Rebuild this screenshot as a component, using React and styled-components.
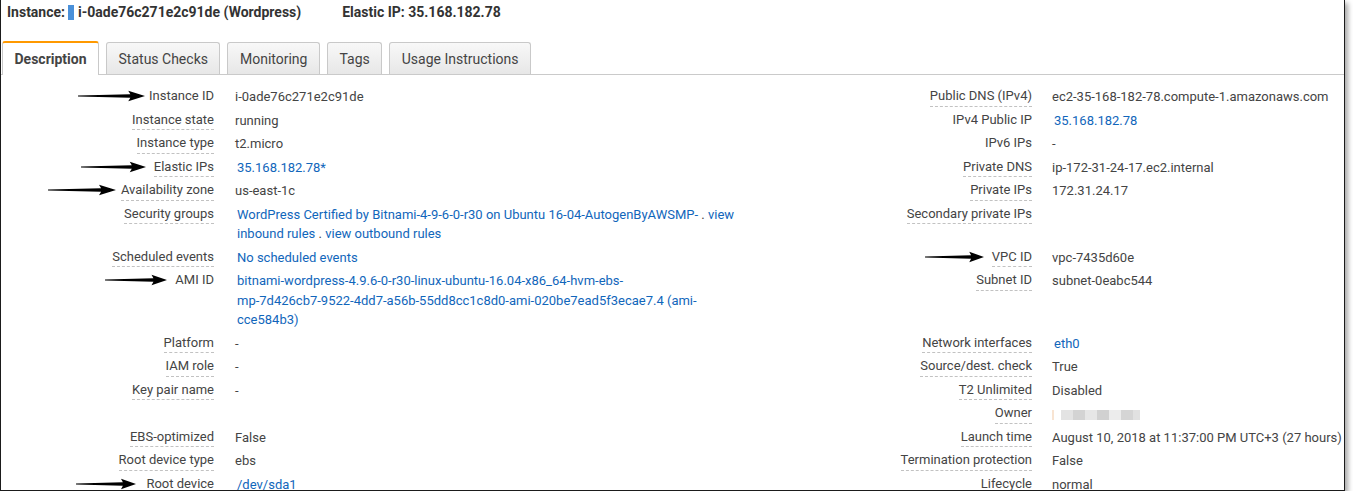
import React from "react";
import styled, { createGlobalStyle } from "styled-components";

const Global = createGlobalStyle`
  html, body { margin: 0; padding: 0; background: #fff; }
  body { font-family: Roboto, "Noto Sans", Arial, sans-serif; }
`;

const Frame = styled.div`
  position: relative;
  width: 1345px;
  height: 491px;
  box-sizing: border-box;
  border: 1px solid #1b1b1b;
  border-top: none;
  overflow: hidden;
  background: #fff;
  box-shadow: 3px 3px 5px rgba(0, 0, 0, 0.35);
`;

const Header = styled.div`
  display: flex;
  align-items: center;
  height: 24px;
  padding-left: 6px;
  font-size: 14px;
  font-weight: 700;
  color: #333;
  white-space: nowrap;
`;

const IdMark = styled.span`
  display: inline-block;
  width: 6px;
  height: 15px;
  background: #4a90d9;
  margin: 0 4px 0 3px;
`;

const HeaderGroup = styled.span`
  margin-left: ${(p) => p.$offset || 0}px;
`;

const TabBar = styled.div`
  display: flex;
  align-items: flex-end;
  height: 33px;
  margin-top: 17px;
  padding-left: 1px;
  border-bottom: 1px solid #cacaca;
`;

const Tab = styled.div`
  box-sizing: border-box;
  height: ${(p) => (p.$active ? 34 : 32)}px;
  margin-left: ${(p) => (p.$first ? 0 : 7)}px;
  margin-bottom: ${(p) => (p.$active ? -1 : 0)}px;
  padding: 0 11.5px;
  display: flex;
  align-items: center;
  font-size: 14px;
  font-weight: ${(p) => (p.$active ? 700 : 400)};
  color: #444;
  border: 1px solid #c9c9c9;
  border-top: ${(p) => (p.$active ? "2px solid #f90" : "1px solid #c9c9c9")};
  border-bottom: none;
  border-radius: 3px 3px 0 0;
  background: ${(p) => (p.$active ? "#fff" : "linear-gradient(#f8f8f8, #e7e7e7)")};
`;

const Grid = styled.div`
  display: grid;
  grid-template-columns: 234px 507px 310px 1fr;
  padding-top: 10px;
  font-size: 13px;
  line-height: 19.5px;
  color: #444;
`;

const LabelCell = styled.div`
  display: flex;
  justify-content: flex-end;
  align-items: flex-start;
  padding: 2px ${(p) => p.$pad}px 2px 0;
  white-space: nowrap;
`;

const Label = styled.span`
  position: relative;
  display: block;
  line-height: 18.5px;
  border-bottom: 1px dashed ${(p) => (p.$line ? "#c2c2c2" : "transparent")};
`;

const ValueCell = styled.div`
  padding: 2px 0;
  min-width: 0;
`;

const LinkWrap = styled.div`
  padding-left: 2px;
`;

const Link = styled.a`
  color: #1166bb;
  text-decoration: none;
`;

const Blur = styled.span`
  display: inline-block;
  width: 88px;
  height: 10px;
  vertical-align: middle;
  filter: blur(0.6px);
  background: linear-gradient(
    90deg,
    #f8e4d2 0 2px,
    #fff 2px 9px,
    #e3e3e3 9px 21px,
    #d3d3d3 21px 33px,
    #e6e6e6 33px 45px,
    #d1d1d1 45px 57px,
    #ececec 57px 69px,
    #d5d5d5 69px 81px,
    #e1e1e1 81px 88px
  );
`;

const ArrowBox = styled.svg`
  position: absolute;
  top: 50%;
  right: calc(100% + ${(p) => p.$gap}px);
  transform: translateY(-50%);
  height: 12px;
  overflow: visible;
`;

const Arrow = ({ w, gap }) => (
  <ArrowBox $gap={gap} width={w} viewBox="0 0 64 12" preserveAspectRatio="none">
    <path
      d="M0 5.6 L50 4.3 L48 0.8 L64 6 L48 11.2 L50 7.7 L0 6.4 Z"
      fill="#000"
    />
  </ArrowBox>
);

const L = (t) => (
  <LinkWrap>
    <Link>{t}</Link>
  </LinkWrap>
);

const rows = [
  {
    l: "Instance ID",
    lNo: true,
    la: { w: 67, gap: 4 },
    v: "i-0ade76c271e2c91de",
    r: "Public DNS (IPv4)",
    rv: "ec2-35-168-182-78.compute-1.amazonaws.com",
  },
  { l: "Instance state", v: "running", r: "IPv4 Public IP", rNo: true, rv: L("35.168.182.78") },
  { l: "Instance type", v: "t2.micro", r: "IPv6 IPs", rNo: true, rv: "-" },
  {
    l: "Elastic IPs",
    la: { w: 65, gap: 8 },
    v: L("35.168.182.78*"),
    r: "Private DNS",
    rv: "ip-172-31-24-17.ec2.internal",
  },
  { l: "Availability zone", la: { w: 68, gap: 5 }, v: "us-east-1c", r: "Private IPs", rv: "172.31.24.17" },
  {
    l: "Security groups",
    v: (
      <LinkWrap>
        <Link>WordPress Certified by Bitnami-4-9-6-0-r30 on Ubuntu 16-04-AutogenByAWSMP-</Link>{" "}
        . <Link>view inbound rules</Link> . <Link>view outbound rules</Link>
      </LinkWrap>
    ),
    r: "Secondary private IPs",
    rv: "",
  },
  {
    l: "Scheduled events",
    v: L("No scheduled events"),
    r: "VPC ID",
    ra: { w: 59, gap: 8 },
    rv: "vpc-7435d60e",
  },
  {
    l: "AMI ID",
    lNo: true,
    la: { w: 62, gap: 8 },
    v: (
      <LinkWrap>
        <Link>
          bitnami-wordpress-4.9.6-0-r30-linux-ubuntu-16.04-x86_64-hvm-ebs-
          <br />
          mp-7d426cb7-9522-4dd7-a56b-55dd8cc1c8d0-ami-020be7ead5f3ecae7.4 (ami-
          <br />
          cce584b3)
        </Link>
      </LinkWrap>
    ),
    r: "Subnet ID",
    rv: "subnet-0eabc544",
  },
  { l: "Platform", v: "-", r: "Network interfaces", rv: L("eth0") },
  { l: "IAM role", v: "-", r: "Source/dest. check", rv: "True" },
  { l: "Key pair name", v: "-", r: "T2 Unlimited", rv: "Disabled" },
  { l: "", lNo: true, v: "", r: "Owner", rv: <Blur /> },
  {
    l: "EBS-optimized",
    v: "False",
    r: "Launch time",
    rv: "August 10, 2018 at 11:37:00 PM UTC+3 (27 hours)",
  },
  { l: "Root device type", v: "ebs", r: "Termination protection", rv: "False" },
  { l: "Root device", la: { w: 60, gap: 10 }, v: L("/dev/sda1"), r: "Lifecycle", rv: "normal" },
];

const tabs = ["Description", "Status Checks", "Monitoring", "Tags", "Usage Instructions"];

export default function App() {
  return (
    <>
      <Global />
      <Frame>
        <Header>
          <span>Instance:</span>
          <IdMark />
          <span>i-0ade76c271e2c91de (Wordpress)</span>
          <HeaderGroup $offset={41}>Elastic IP: 35.168.182.78</HeaderGroup>
        </Header>
        <TabBar>
          {tabs.map((t, i) => (
            <Tab key={t} $active={i === 0} $first={i === 0}>
              {t}
            </Tab>
          ))}
        </TabBar>
        <Grid>
          {rows.map((row, i) => (
            <React.Fragment key={i}>
              <LabelCell $pad={21}>
                {row.l && (
                  <Label $line={!row.lNo}>
                    {row.la && <Arrow w={row.la.w} gap={row.la.gap} />}
                    {row.l}
                  </Label>
                )}
              </LabelCell>
              <ValueCell>{row.v}</ValueCell>
              <LabelCell $pad={20}>
                <Label $line={!row.rNo}>
                  {row.ra && <Arrow w={row.ra.w} gap={row.ra.gap} />}
                  {row.r}
                </Label>
              </LabelCell>
              <ValueCell>{row.rv}</ValueCell>
            </React.Fragment>
          ))}
        </Grid>
      </Frame>
    </>
  );
}
